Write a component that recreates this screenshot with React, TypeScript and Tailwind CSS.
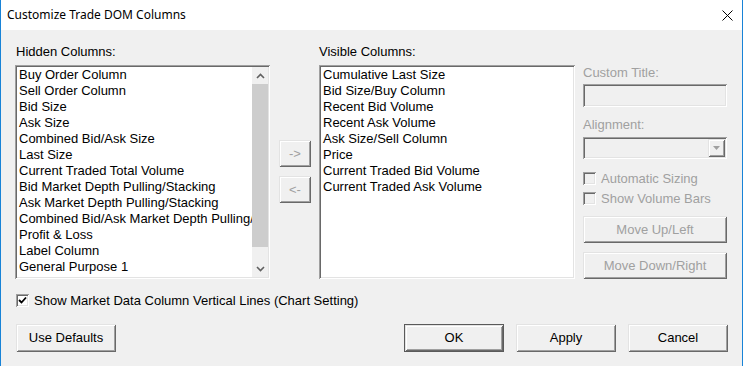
const hidden = [
  "Buy Order Column",
  "Sell Order Column",
  "Bid Size",
  "Ask Size",
  "Combined Bid/Ask Size",
  "Last Size",
  "Current Traded Total Volume",
  "Bid Market Depth Pulling/Stacking",
  "Ask Market Depth Pulling/Stacking",
  "Combined Bid/Ask Market Depth Pulling/Stacking",
  "Profit & Loss",
  "Label Column",
  "General Purpose 1",
  "General Purpose 2",
];

const visible = [
  "Cumulative Last Size",
  "Bid Size/Buy Column",
  "Recent Bid Volume",
  "Recent Ask Volume",
  "Ask Size/Sell Column",
  "Price",
  "Current Traded Bid Volume",
  "Current Traded Ask Volume",
];

const sunken =
  "shadow-[inset_1px_1px_#a0a0a0,inset_-1px_-1px_#ffffff,inset_2px_2px_#696969,inset_-2px_-2px_#e3e3e3]";
const raised =
  "shadow-[inset_1px_1px_#e3e3e3,inset_-1px_-1px_#696969,inset_2px_2px_#ffffff,inset_-2px_-2px_#a0a0a0]";

const Button = ({
  label,
  className = "",
  disabled = false,
  isDefault = false,
}: {
  label: string;
  className?: string;
  disabled?: boolean;
  isDefault?: boolean;
}) => (
  <div
    className={`flex items-center justify-center bg-[#f0f0f0] ${
      disabled ? "text-[#a0a0a0]" : "text-black"
    } ${isDefault ? "border border-[#5a5a5a]" : ""} ${className}`}
  >
    <div className={`w-full h-full flex items-center justify-center ${raised}`}>
      {label}
    </div>
  </div>
);

const Chevron = ({ up }: { up?: boolean }) => (
  <svg width="9" height="6" viewBox="0 0 9 6">
    <path
      d={up ? "M1 5 L4.5 1.5 L8 5" : "M1 1 L4.5 4.5 L8 1"}
      fill="none"
      stroke="#606060"
      strokeWidth="1.6"
    />
  </svg>
);

const CheckBox = ({ checked, disabled }: { checked?: boolean; disabled?: boolean }) => (
  <div
    className={`w-[13px] h-[13px] shrink-0 flex items-center justify-center ${
      disabled ? "bg-[#f0f0f0]" : "bg-white"
    } ${sunken}`}
  >
    {checked && (
      <svg width="9" height="9" viewBox="0 0 9 9">
        <path d="M1 4 L3.5 6.5 L8 1.5" fill="none" stroke="#000" strokeWidth="1.8" />
      </svg>
    )}
  </div>
);

export default function App() {
  return (
    <div
      className="w-[743px] h-[366px] bg-[#f0f0f0] border-x border-[#1883d7] flex flex-col overflow-hidden text-[13px] text-black"
      style={{ fontFamily: '"Liberation Sans", Arial, sans-serif' }}
    >
      {/* title bar */}
      <div className="h-[30px] bg-white flex items-center justify-between pl-[6px] pr-[9px] shrink-0">
        <span className="text-[12px]" style={{ fontFamily: '"Noto Sans", "Open Sans", sans-serif' }}>
          Customize Trade DOM Columns
        </span>
        <svg width="11" height="11" viewBox="0 0 11 11">
          <path d="M0.5 0.5 L10.5 10.5 M10.5 0.5 L0.5 10.5" stroke="#000" strokeWidth="1" />
        </svg>
      </div>

      <div className="pt-[14px] pl-[14px] flex flex-col">
        <div className="flex">
          {/* hidden columns */}
          <div className="w-[255px] flex flex-col">
            <div className="h-4 leading-4 mb-[5px] pl-[1px]">Hidden Columns:</div>
            <div className={`h-[214px] bg-white flex p-[2px] ${sunken}`}>
              <div className="flex-1 overflow-hidden">
                {hidden.map((h) => (
                  <div key={h} className="leading-4 pl-[2px] whitespace-nowrap">
                    {h}
                  </div>
                ))}
              </div>
              <div className="w-[16px] bg-[#f0f0f0] flex flex-col">
                <div className="h-[17px] flex items-center justify-center">
                  <Chevron up />
                </div>
                <div className="h-[163px] bg-[#cdcdcd]" />
                <div className="flex-1" />
                <div className="h-[17px] flex items-center justify-center">
                  <Chevron />
                </div>
              </div>
            </div>
          </div>

          {/* move buttons */}
          <div className="ml-[9px] w-[32px] mt-[96px] flex flex-col gap-[9px]">
            <Button label="->" disabled className="h-[27px]" />
            <Button label="<-" disabled className="h-[27px]" />
          </div>

          {/* visible columns */}
          <div className="ml-[8px] w-[256px] flex flex-col">
            <div className="h-4 leading-4 mb-[5px]">Visible Columns:</div>
            <div className={`h-[214px] bg-white p-[2px] ${sunken}`}>
              {visible.map((v) => (
                <div key={v} className="leading-4 pl-[2px] whitespace-nowrap">
                  {v}
                </div>
              ))}
            </div>
          </div>

          {/* side panel */}
          <div className="ml-[8px] w-[144px] mt-[21px] flex flex-col text-[#a0a0a0]">
            <div className="h-4 leading-4">Custom Title:</div>
            <div className={`mt-[3px] h-[23px] bg-[#f0f0f0] ${sunken}`} />
            <div className="mt-[10px] h-4 leading-4">Alignment:</div>
            <div className={`mt-[4px] h-[22px] bg-[#f0f0f0] flex justify-end p-[2px] ${sunken}`}>
              <div className={`w-[17px] h-full flex items-center justify-center ${raised}`}>
                <svg width="7" height="4" viewBox="0 0 7 4">
                  <path d="M0 0 L7 0 L3.5 4 Z" fill="#a0a0a0" />
                </svg>
              </div>
            </div>
            <div className="mt-[13px] h-[13px] flex items-center gap-[5px]">
              <CheckBox disabled />
              <span className="leading-4">Automatic Sizing</span>
            </div>
            <div className="mt-[7px] h-[13px] flex items-center gap-[5px]">
              <CheckBox disabled />
              <span className="leading-4">Show Volume Bars</span>
            </div>
            <Button label="Move Up/Left" disabled className="mt-[11px] h-[27px]" />
            <Button label="Move Down/Right" disabled className="mt-[9px] h-[27px]" />
          </div>
        </div>

        {/* chart setting checkbox */}
        <div className="mt-[15px] h-[13px] flex items-center gap-[5px] pl-[1px]">
          <CheckBox checked />
          <span className="leading-4">Show Market Data Column Vertical Lines (Chart Setting)</span>
        </div>

        {/* bottom buttons */}
        <div className="mt-[17px] flex pl-[1px]">
          <Button label="Use Defaults" className="w-[100px] h-[28px]" />
          <Button label="OK" isDefault className="ml-[288px] w-[100px] h-[28px]" />
          <Button label="Apply" className="ml-[12px] w-[100px] h-[28px]" />
          <Button label="Cancel" className="ml-[12px] w-[100px] h-[28px]" />
        </div>
      </div>
    </div>
  );
}
